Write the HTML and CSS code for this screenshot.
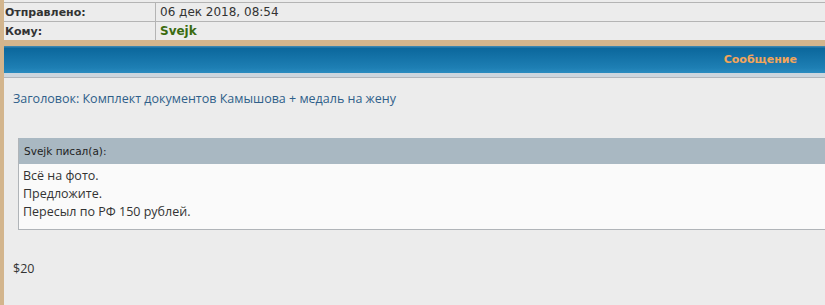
FILE: index.html
```html
<!DOCTYPE html>
<html lang="ru">
<head>
    <meta charset="UTF-8">
    <title>Сообщение</title>
    <link rel="stylesheet" href="styles.css">
</head>
<body>
    <div class="page">
        <table class="info">
            <tr>
                <td class="label">Отправлено:</td>
                <td class="value">06 дек 2018, 08:54</td>
            </tr>
            <tr>
                <td class="label">Кому:</td>
                <td class="value user">Svejk</td>
            </tr>
        </table>

        <div class="sep"></div>

        <div class="cat">
            <span>Сообщение</span>
        </div>
        <div class="cat-bottom"></div>

        <div class="post">
            <div class="subject">Заголовок: Комплект документов Камышова + медаль на жену</div>

            <div class="quote">
                <div class="quote-title">Svejk писал(а):</div>
                <div class="quote-body">
                    Всё на фото.<br>
                    Предложите.<br>
                    Пересыл по РФ 150 рублей.
                </div>
            </div>

            <div class="text">$20</div>
        </div>
    </div>
</body>
</html>
```

FILE: styles.css
```css
body {
    margin: 0;
    padding: 0;
    background-color: #ececec;
    font-family: "DejaVu Sans", Verdana, sans-serif;
    overflow: hidden;
}

.page {
    border-left: 4px solid #d3b58d;
    min-height: 305px;
    padding-top: 2px;
}

.info {
    width: 100%;
    border-collapse: collapse;
    border-top: 1px solid #b4b4b4;
}

.info td {
    height: 18px;
    padding: 0 0 0 1px;
    font-size: 12px;
    color: #333;
    border-bottom: 1px solid #b4b4b4;
}

.info tr:last-child td {
    border-bottom: none;
}

.info .label {
    width: 150px;
    font-weight: bold;
    font-size: 11px;
    border-right: 1px solid #b4b4b4;
}

.info .value {
    padding-left: 4px;
}

.info .user {
    color: #3b6b10;
    font-weight: bold;
}

.sep {
    height: 6px;
    background: #d3b58d;
}

.cat {
    height: 27px;
    background: linear-gradient(#3a85b0 0, #3a85b0 1px, #0b679c 2px, #1e7fb4 22px, #2a8cc0 27px);
    display: flex;
    align-items: center;
    justify-content: flex-end;
    padding-right: 28px;
}

.cat span {
    color: #f3a55a;
    font-size: 11px;
    font-weight: bold;
}

.cat-bottom {
    height: 4px;
    background: #cdd6de;
    border-bottom: 1px solid #b0b6bc;
}

.post {
    padding: 12px 0 0 9px;
    font-family: "Open Sans", "DejaVu Sans", sans-serif;
    font-size: 12.5px;
    color: #333;
}

.subject {
    color: #2f5f8a;
    height: 18px;
    line-height: 18px;
}

.quote {
    margin: 30px 0 0 5px;
    width: 900px;
    border-left: 1px solid #b0b4b8;
    border-bottom: 1px solid #b0b4b8;
}

.quote-title {
    height: 26px;
    line-height: 26px;
    background: #a9b8c2;
    padding-left: 5px;
    font-family: "DejaVu Sans", sans-serif;
    font-size: 10.5px;
    color: #222;
}

.quote-body {
    background: #fafafa;
    padding: 3px 0 8px 4px;
    line-height: 18px;
}

.text {
    margin-top: 30px;
    line-height: 18px;
}
```
